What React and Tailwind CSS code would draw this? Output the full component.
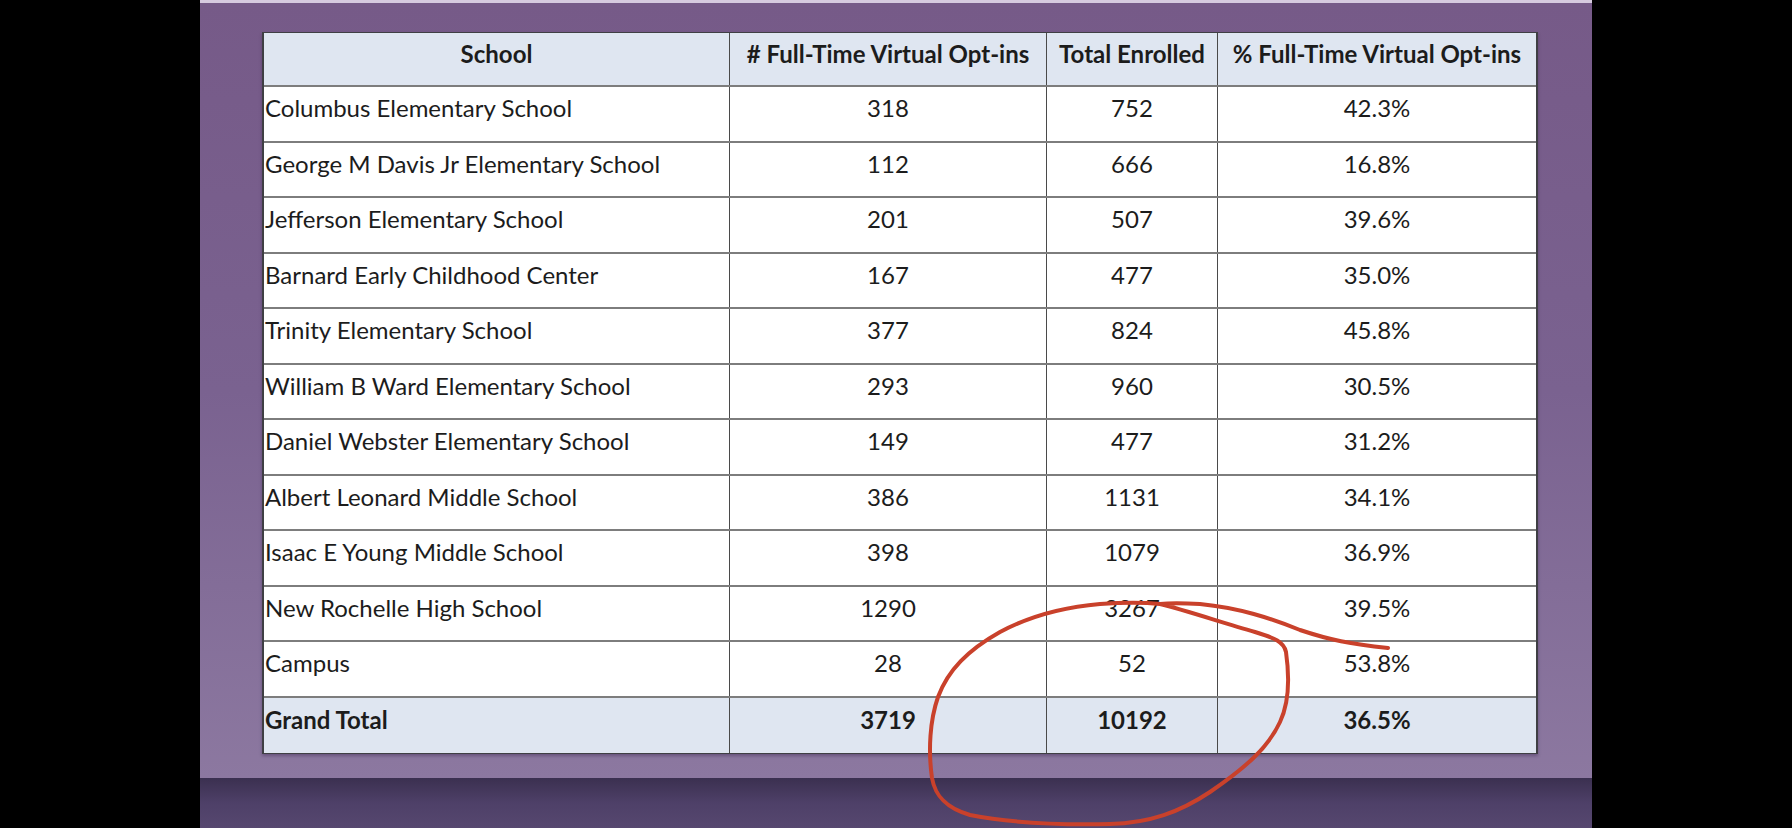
import React from "react";

const rows = [
  ["Columbus Elementary School", "318", "752", "42.3%"],
  ["George M Davis Jr Elementary School", "112", "666", "16.8%"],
  ["Jefferson Elementary School", "201", "507", "39.6%"],
  ["Barnard Early Childhood Center", "167", "477", "35.0%"],
  ["Trinity Elementary School", "377", "824", "45.8%"],
  ["William B Ward Elementary School", "293", "960", "30.5%"],
  ["Daniel Webster Elementary School", "149", "477", "31.2%"],
  ["Albert Leonard Middle School", "386", "1131", "34.1%"],
  ["Isaac E Young Middle School", "398", "1079", "36.9%"],
  ["New Rochelle High School", "1290", "3267", "39.5%"],
  ["Campus", "28", "52", "53.8%"],
];

const cols = ["w-[465px]", "w-[317px]", "w-[171px]", "flex-1"];

function Row({ cells, head, total }) {
  const bg = head || total ? "bg-[#dfe6f1]" : "bg-white";
  const weight = head || total ? "font-bold" : "font-normal";
  return (
    <div
      className={`flex ${bg} ${weight} ${head ? "h-[54px]" : "h-[55.5px]"} ${
        total ? "" : "border-b-2 border-[#7d7d7d]"
      }`}
    >
      {cells.map((c, i) => (
        <div
          key={i}
          className={`${cols[i]} flex items-center pb-[11px] ${
            i > 0 ? "border-l border-[#4a4a4a] justify-center" : ""
          } ${i === 0 && !head ? "pl-[1px]" : "justify-center"}`}
        >
          {c}
        </div>
      ))}
    </div>
  );
}

export default function App() {
  return (
    <div className="relative w-[1792px] h-[828px] bg-black flex justify-center overflow-hidden">
      <div className="w-[1392px] h-full flex flex-col">
        <div className="h-[3px] bg-[#d6cadf]" />
        <div className="flex-1 bg-gradient-to-b from-[#765a88] via-[#7a6290] to-[#8c78a0] pt-[29px] pl-[62px] pr-[54px]">
          <div
            className="border-x-2 border-y border-[#3f3f44] text-[24px] text-[#1c1c1c] leading-none shadow-[0_2px_3px_rgba(40,20,60,0.35)]"
            style={{ fontFamily: "Lato, 'Open Sans', sans-serif" }}
          >
            <Row
              head
              cells={[
                "School",
                "# Full-Time Virtual Opt-ins",
                "Total Enrolled",
                "% Full-Time Virtual Opt-ins",
              ]}
            />
            {rows.map((r) => (
              <Row key={r[0]} cells={r} />
            ))}
            <Row total cells={["Grand Total", "3719", "10192", "36.5%"]} />
          </div>
        </div>
        <div className="h-[50px] bg-gradient-to-b from-[#3b3050] via-[#4e4068] to-[#56476f]" />
      </div>
      <svg
        className="absolute inset-0 pointer-events-none"
        width="1792"
        height="828"
        viewBox="0 0 1792 828"
      >
        <path
          d="M1388 648 C1350 644 1330 640 1300 630 C1270 618 1240 608 1200 604 C1180 603 1170 603 1160 604 C1185 610 1220 622 1255 632 C1275 638 1284 642 1286 652 C1290 680 1288 705 1280 722 C1268 748 1245 768 1210 792 C1180 812 1150 823 1110 824 C1060 825 1010 823 970 815 C945 808 935 795 932 778 C928 750 930 720 938 697 C948 670 968 650 1000 632 C1030 616 1065 607 1100 604 C1130 602 1150 603 1160 604"
          fill="none"
          stroke="#c9412b"
          strokeWidth="4"
          strokeLinecap="round"
          strokeLinejoin="round"
        />
      </svg>
    </div>
  );
}
